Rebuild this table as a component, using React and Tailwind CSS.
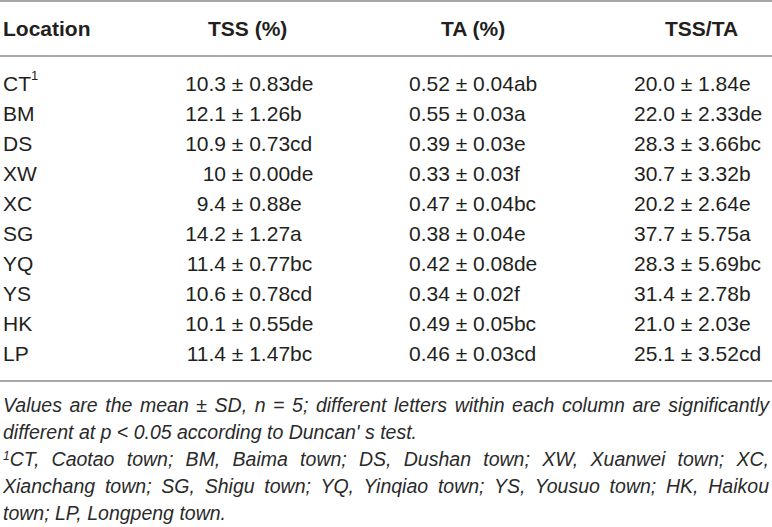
import React from 'react';

const rows = [
  { loc: 'CT', sup: '1', tss: ['10.3', '0.83de'], ta: '0.52 ± 0.04ab', ratio: '20.0 ± 1.84e' },
  { loc: 'BM', tss: ['12.1', '1.26b'], ta: '0.55 ± 0.03a', ratio: '22.0 ± 2.33de' },
  { loc: 'DS', tss: ['10.9', '0.73cd'], ta: '0.39 ± 0.03e', ratio: '28.3 ± 3.66bc' },
  { loc: 'XW', tss: ['10', '0.00de'], ta: '0.33 ± 0.03f', ratio: '30.7 ± 3.32b' },
  { loc: 'XC', tss: ['9.4', '0.88e'], ta: '0.47 ± 0.04bc', ratio: '20.2 ± 2.64e' },
  { loc: 'SG', tss: ['14.2', '1.27a'], ta: '0.38 ± 0.04e', ratio: '37.7 ± 5.75a' },
  { loc: 'YQ', tss: ['11.4', '0.77bc'], ta: '0.42 ± 0.08de', ratio: '28.3 ± 5.69bc' },
  { loc: 'YS', tss: ['10.6', '0.78cd'], ta: '0.34 ± 0.02f', ratio: '31.4 ± 2.78b' },
  { loc: 'HK', tss: ['10.1', '0.55de'], ta: '0.49 ± 0.05bc', ratio: '21.0 ± 2.03e' },
  { loc: 'LP', tss: ['11.4', '1.47bc'], ta: '0.46 ± 0.03cd', ratio: '25.1 ± 3.52cd' },
];

const Rule = () => <div className="h-[2px] bg-[#a8a8a8]" />;

const Line = ({ children, last }) => (
  <div className={last ? 'text-left' : 'text-justify [text-align-last:justify]'}>{children}</div>
);

const App = () => {
  return (
    <div className="w-[772px] h-[527px] bg-white text-[#231f20] font-['Liberation_Sans',Arial,sans-serif] overflow-hidden">
      <Rule />
      <div className="grid grid-cols-[182px_224px_225px_1fr] pl-[3px] h-[53px] items-center text-[21px] font-bold">
        <div>Location</div>
        <div className="pl-[23px]">TSS (%)</div>
        <div className="pl-[32px]">TA (%)</div>
        <div className="pl-[31px]">TSS/TA</div>
      </div>
      <Rule />
      <div className="pt-[11px] pb-[12px] text-[21px]">
        {rows.map((r) => (
          <div key={r.loc} className="grid grid-cols-[182px_224px_225px_1fr] pl-[3px] h-[30px] items-center whitespace-pre">
            <div>
              {r.loc}
              {r.sup && <span className="text-[13px] align-top relative -top-[2px]">{r.sup}</span>}
            </div>
            <div className="flex">
              <span className="w-[41px] text-right">{r.tss[0]}</span>
              <span>{' ± ' + r.tss[1]}</span>
            </div>
            <div>{r.ta}</div>
            <div>{r.ratio}</div>
          </div>
        ))}
      </div>
      <Rule />
      <div className="pt-[10px] px-[3px] text-[19.5px] italic leading-[27px] text-[#2a2a2a]">
        <Line>Values are the mean ± SD, n = 5; different letters within each column are significantly</Line>
        <Line last>different at p &lt; 0.05 according to Duncan' s test.</Line>
        <Line>
          <sup className="text-[12px]">1</sup>CT, Caotao town; BM, Baima town; DS, Dushan town; XW, Xuanwei town; XC,
        </Line>
        <Line>Xianchang town; SG, Shigu town; YQ, Yinqiao town; YS, Yousuo town; HK, Haikou</Line>
        <Line last>town; LP, Longpeng town.</Line>
      </div>
    </div>
  );
};

export default App;
